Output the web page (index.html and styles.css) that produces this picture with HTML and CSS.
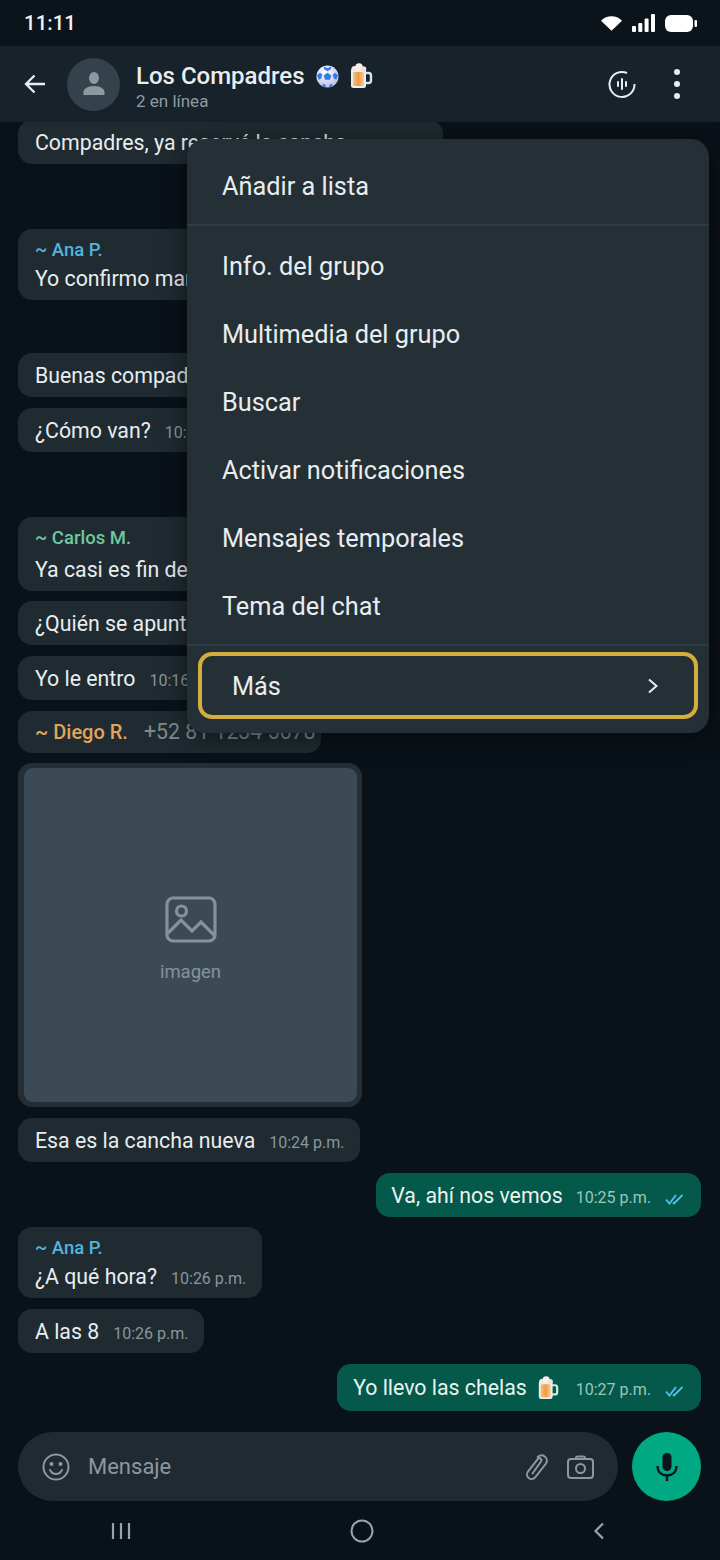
FILE: index.html
```html
<!DOCTYPE html>
<html lang="es">

<head>
  <meta charset="UTF-8">
  <meta name="viewport" content="width=device-width, initial-scale=1.0">
  <title>Los Compadres</title>
  <link rel="stylesheet" href="styles.css">
</head>

<body>
  <svg class="defs" width="0" height="0">
    <defs>
      <linearGradient id="beerFill" x1="0" y1="0" x2="1" y2="0">
        <stop offset="0" stop-color="#f6c27e" />
        <stop offset="0.5" stop-color="#ef9a45" />
        <stop offset="1" stop-color="#f8cf8e" />
      </linearGradient>
      <symbol id="beer" viewBox="0 0 24 26">
        <path d="M16 10h3.500a2.500 2.500 0 0 1 2.500 2.500v5a2.500 2.500 0 0 1-2.500 2.500H16" fill="none" stroke="#cfe8ea" stroke-width="2.400" />
        <rect x="2" y="5" width="15" height="20" rx="2.500" fill="#e8f1f0" />
        <rect x="4" y="9" width="11" height="14" rx="1" fill="url(#beerFill)" />
        <circle cx="5.500" cy="6" r="3" fill="#f3e9e4" />
        <circle cx="10" cy="4" r="3.800" fill="#f7efec" />
        <circle cx="14.500" cy="6" r="2.800" fill="#efe3de" />
      </symbol>
      <symbol id="ticks" viewBox="0 0 20 12">
        <path d="M1 6.500l3.500 4L11 2M8 9.500l1 1L17.500 2" fill="none" stroke="#53bdeb" stroke-width="1.800" />
      </symbol>
    </defs>
  </svg>

  <div class="phone">
    <div class="status-bar">
      <span class="clock">11:11</span>
      <div class="status-icons">
        <svg width="21" height="15" viewBox="0 0 22 15"><path d="M0 4.500C3 1.500 7 0 11 0s8 1.500 11 4.500L11 15z" fill="#fff" /></svg>
        <svg width="23" height="18" viewBox="0 0 23 18">
          <rect x="0" y="12" width="4" height="6" rx="1" fill="#fff" />
          <rect x="6.300" y="9" width="4" height="9" rx="1" fill="#fff" />
          <rect x="12.600" y="4.500" width="4" height="13.500" rx="1" fill="#fff" />
          <rect x="19" y="0" width="4" height="18" rx="1" fill="#fff" />
        </svg>
        <svg width="32" height="17" viewBox="0 0 32 17">
          <rect x="0" y="0" width="28" height="17" rx="6" fill="#fff" />
          <rect x="29.500" y="5" width="2.500" height="7" rx="1" fill="#fff" />
        </svg>
      </div>
    </div>

    <header class="chat-header">
      <svg class="back" width="22" height="20" viewBox="0 0 22 20"><path d="M21 10H2M10.500 1.500L2 10l8.500 8.500" fill="none" stroke="#e9edef" stroke-width="2.300" /></svg>
      <div class="avatar">
        <svg width="26" height="26" viewBox="0 0 26 26">
          <ellipse cx="13" cy="7" rx="5" ry="6" fill="#8c999f" />
          <path d="M2.500 24v-3c0-3 4-6 10.500-6s10.500 3 10.500 6v3z" fill="#8c999f" />
        </svg>
      </div>
      <div class="chat-title">
        <div class="chat-name">
          <span>Los Compadres</span>
          <svg class="emoji-ball" width="23" height="23" viewBox="0 0 24 24">
            <defs>
              <radialGradient id="ballFill" cx="0.400" cy="0.300" r="0.800">
                <stop offset="0" stop-color="#ffffff" />
                <stop offset="1" stop-color="#b7b4ea" />
              </radialGradient>
            </defs>
            <circle cx="12" cy="12" r="11.500" fill="url(#ballFill)" />
            <path d="M12 8l4 3-1.500 4.500h-5L8 11z" fill="#2f7de1" />
            <path d="M8 1.500l4 2 4-2-.5 3-3.500 2-3.500-2zM1 11l3 -3 2.500 2-1 4-2.500 1.500zM23 11l-3-3-2.500 2 1 4 2.500 1.500zM7 19.500l3 1v3l-3-1.500zM17 19.500l-3 1v3l3-1.500z" fill="#2f7de1" />
          </svg>
          <svg class="emoji-beer" width="24" height="26"><use href="#beer" /></svg>
        </div>
        <div class="chat-online">2 en línea</div>
      </div>
      <svg class="voice" width="30" height="28" viewBox="0 0 30 28">
        <path d="M20 3A12.500 12.500 0 1 0 27.500 14" fill="none" stroke="#e9edef" stroke-width="2" />
        <path d="M15 9v10M11 12v4M19 12v4" fill="none" stroke="#e9edef" stroke-width="2" stroke-linecap="round" />
      </svg>
      <div class="dots"><i></i><i></i><i></i></div>
    </header>

    <main class="chat">
      <div class="bubble first-msg">Compadres, ya reservé la cancha</div>

      <div class="bubble named gap-out">
        <div class="sender blue">~ Ana P.</div>
        Yo confirmo mañana<span class="time">10:15 p.m.</span>
      </div>

      <div class="bubble gap-mid">Buenas compadres<span class="time">10:16 p.m.</span></div>
      <div class="bubble">¿Cómo van?<span class="time">10:16 p.m.</span></div>

      <div class="bubble named taller gap-out">
        <div class="sender green">~ Carlos M.</div>
        Ya casi es fin de semana<span class="time">10:16 p.m.</span>
      </div>
      <div class="bubble">¿Quién se apunta?<span class="time">10:16 p.m.</span></div>
      <div class="bubble">Yo le entro<span class="time">10:16 p.m.</span></div>

      <div class="bubble sender-row">
        <span class="sender orange">~ Diego R.</span>
        <span class="phone-number">+52 81 1234 5678</span>
      </div>

      <div class="photo">
        <div class="photo-inner">
          <svg width="52" height="47" viewBox="0 0 52 47">
            <rect x="2" y="2" width="48" height="43" rx="6" fill="none" stroke="#84929c" stroke-width="3.200" />
            <circle cx="16.500" cy="15" r="5" fill="none" stroke="#84929c" stroke-width="3.200" />
            <path d="M3 37l13-13 11 11 9-9 13 13" fill="none" stroke="#84929c" stroke-width="3.200" />
          </svg>
          <span class="photo-label">imagen</span>
        </div>
      </div>

      <div class="bubble">Esa es la cancha nueva<span class="time">10:24 p.m.</span></div>

      <div class="bubble out">
        Va, ahí nos vemos<span class="time">10:25 p.m.</span>
        <svg class="ticks" width="20" height="12"><use href="#ticks" /></svg>
      </div>

      <div class="bubble named">
        <div class="sender blue">~ Ana P.</div>
        ¿A qué hora?<span class="time">10:26 p.m.</span>
      </div>
      <div class="bubble">A las 8<span class="time">10:26 p.m.</span></div>

      <div class="bubble out tall-out">
        Yo llevo las chelas
        <svg class="emoji-inline" width="22" height="24"><use href="#beer" /></svg>
        <span class="time">10:27 p.m.</span>
        <svg class="ticks" width="20" height="12"><use href="#ticks" /></svg>
      </div>
    </main>

    <div class="composer">
      <div class="composer-field">
        <svg width="28" height="28" viewBox="0 0 28 28">
          <circle cx="14" cy="14" r="12.500" fill="none" stroke="#8d989e" stroke-width="2" />
          <circle cx="9.500" cy="11" r="2" fill="#8d989e" />
          <circle cx="18.500" cy="11" r="2" fill="#8d989e" />
          <path d="M8 17c1.500 3 3.500 4 6 4s4.500-1 6-4" fill="none" stroke="#8d989e" stroke-width="2" stroke-linecap="round" />
        </svg>
        <span class="composer-text">Mensaje</span>
        <svg class="clip" width="26" height="28" viewBox="0 0 26 28">
          <path d="M9.500 20.500L18 8.500a2 2 0 0 0-3.300-2.400L4.800 18.800a4.600 4.600 0 0 0 7.200 5.700L23 10.500a5.300 5.300 0 0 0-8.400-6.400" fill="none" stroke="#8d989e" stroke-width="2" stroke-linecap="round" />
        </svg>
        <svg width="27" height="24" viewBox="0 0 27 24">
          <path d="M9 4V3a1.500 1.500 0 0 1 1.500-1.500h6A1.500 1.500 0 0 1 18 3v1" fill="none" stroke="#8d989e" stroke-width="2" />
          <rect x="1" y="4" width="25" height="19" rx="3" fill="none" stroke="#8d989e" stroke-width="2" />
          <circle cx="13.500" cy="13.500" r="4.500" fill="none" stroke="#8d989e" stroke-width="2" />
        </svg>
      </div>
      <div class="mic">
        <svg width="24" height="30" viewBox="0 0 24 30">
          <rect x="7.500" y="1" width="9" height="18" rx="4.500" fill="#0b141a" />
          <path d="M2.500 14c0 6 4 9.500 9.500 9.500s9.500-3.500 9.500-9.500M12 23v6" fill="none" stroke="#0b141a" stroke-width="2.400" />
        </svg>
      </div>
    </div>

    <nav class="nav-bar">
      <svg width="20" height="18" viewBox="0 0 20 18"><path d="M2 1v16M10 1v16M18 1v16" stroke="#9aa3a8" stroke-width="2.200" /></svg>
      <svg width="24" height="24" viewBox="0 0 24 24"><circle cx="12" cy="12" r="10.500" fill="none" stroke="#9aa3a8" stroke-width="2" /></svg>
      <svg width="12" height="18" viewBox="0 0 12 18"><path d="M10 1.500L2.500 9l7.500 7.500" fill="none" stroke="#9aa3a8" stroke-width="2.200" /></svg>
    </nav>

    <div class="menu">
      <div class="menu-item first">Añadir a lista</div>
      <div class="menu-group">
        <div class="menu-item">Info. del grupo</div>
        <div class="menu-item">Multimedia del grupo</div>
        <div class="menu-item">Buscar</div>
        <div class="menu-item">Activar notificaciones</div>
        <div class="menu-item">Mensajes temporales</div>
        <div class="menu-item">Tema del chat</div>
      </div>
      <div class="menu-more">
        <span>Más</span>
        <svg width="12" height="16" viewBox="0 0 12 16"><path d="M2 1.500L9.500 8 2 14.500" fill="none" stroke="#e9edef" stroke-width="2" /></svg>
      </div>
    </div>
  </div>
</body>

</html>
```

FILE: styles.css
```css
* {
  margin: 0;
  padding: 0;
  box-sizing: border-box;
}

body {
  background: #0a1219;
  font-family: Roboto, "Noto Sans", sans-serif;
  color: #e9edef;
}

.defs {
  position: absolute;
}

.phone {
  position: relative;
  display: flex;
  flex-direction: column;
  width: 720px;
  height: 1560px;
  overflow: hidden;
  background: #0a1219;
}

/* status bar */
.status-bar {
  display: flex;
  align-items: center;
  justify-content: space-between;
  height: 46px;
  padding: 0 23px 0 24px;
  background: #0b141b;
}

.clock {
  font-size: 20.500px;
  font-weight: 500;
  color: #f1f3f4;
}

.status-icons {
  display: flex;
  align-items: center;
  gap: 10px;
}

/* header */
.chat-header {
  display: flex;
  align-items: center;
  height: 76px;
  padding: 0 40px 0 24px;
  background: #17222a;
}

.avatar {
  display: flex;
  align-items: center;
  justify-content: center;
  width: 53px;
  height: 53px;
  margin-left: 21px;
  border-radius: 50%;
  background: #34424b;
}

.chat-title {
  flex: 1;
  margin-left: 16px;
  padding-top: 5px;
}

.chat-name {
  display: flex;
  align-items: center;
  height: 30px;
  font-size: 24px;
  font-weight: 500;
}

.emoji-ball {
  margin-left: 11px;
}

.emoji-beer {
  margin-left: 10px;
}

.chat-online {
  margin-top: -1px;
  font-size: 17px;
  line-height: 22px;
  color: #8f9ba1;
}

.voice {
  margin-right: 37px;
}

.dots {
  display: flex;
  flex-direction: column;
  gap: 6px;
}

.dots i {
  display: block;
  width: 6px;
  height: 6px;
  border-radius: 50%;
  background: #e9edef;
}

/* messages */
.chat {
  display: flex;
  flex: 1;
  flex-direction: column;
  align-items: flex-start;
  gap: 10.700px;
  padding: 0 19px 0 18px;
  overflow: hidden;
}

.bubble {
  padding: 11px 16px 9px 17px;
  border-radius: 14px;
  background: #1f2b31;
  font-size: 21.300px;
  line-height: 24px;
  white-space: nowrap;
}

.first-msg {
  min-width: 425px;
  margin-top: -2px;
}

.bubble.named {
  padding-top: 9px;
  padding-bottom: 7px;
  line-height: 28px;
}

.bubble.named .sender {
  margin-bottom: 3px;
}

.bubble.taller .sender {
  margin-bottom: 6px;
}

.gap-out {
  margin-top: 54.300px;
}

.gap-mid {
  margin-top: 42.300px;
}

.sender {
  font-size: 18.500px;
  font-weight: 500;
  line-height: 24px;
}

.sender.blue {
  color: #53b4dd;
}

.sender.green {
  color: #6fc99c;
}

.sender.orange {
  font-size: 20px;
  color: #e2a458;
}

.sender-row {
  display: flex;
  align-items: center;
  gap: 16px;
  width: 303px;
  padding-top: 9px;
  padding-bottom: 9px;
}

.phone-number {
  color: #7f8b91;
}

.time {
  margin-left: 14px;
  font-size: 16px;
  line-height: 1;
  color: #8b969c;
}

.bubble.out {
  display: flex;
  align-items: center;
  align-self: flex-end;
  padding-left: 15px;
  background: #04594a;
  color: #e9f3f0;
}

.bubble.out .time {
  margin-top: 4px;
  margin-left: 13px;
  color: #9cc7bb;
}

.bubble.tall-out {
  padding-top: 12px;
  padding-bottom: 11px;
  padding-left: 16px;
}

.bubble.tall-out .time {
  margin-left: 17px;
}

.emoji-inline {
  margin-left: 10px;
}

.ticks {
  margin: 6px 0 0 14px;
}

.photo {
  width: 344px;
  height: 344px;
  padding: 5px 5px 5px 6px;
  border-radius: 14px;
  background: #232e36;
}

.photo-inner {
  display: flex;
  flex-direction: column;
  align-items: center;
  justify-content: center;
  gap: 18px;
  height: 100%;
  padding-top: 8px;
  border-radius: 9px;
  background: #3c4a55;
}

.photo-label {
  font-size: 18.500px;
  color: #84929c;
}

/* composer */
.composer {
  display: flex;
  align-items: center;
  gap: 14px;
  padding: 0 19px 0 18px;
}

.composer-field {
  display: flex;
  flex: 1;
  align-items: center;
  height: 69px;
  padding: 0 24px;
  border-radius: 35px;
  background: #1f2a31;
}

.composer-text {
  flex: 1;
  margin-left: 18px;
  font-size: 22px;
  color: #8d989e;
}

.clip {
  margin-right: 18px;
}

.mic {
  display: flex;
  align-items: center;
  justify-content: center;
  width: 69px;
  height: 69px;
  border-radius: 50%;
  background: #00a884;
}

/* nav */
.nav-bar {
  display: flex;
  align-items: center;
  justify-content: space-between;
  height: 59px;
  padding: 0 115px 0 111px;
}

/* overflow menu */
.menu {
  position: absolute;
  top: 139px;
  left: 187px;
  width: 522px;
  height: 594px;
  padding-bottom: 14px;
  border-radius: 18px;
  background: #243036;
  box-shadow: 0 4px 24px rgba(0, 0, 0, 0.55);
  font-size: 25.300px;
}

.menu-item {
  display: flex;
  align-items: center;
  height: 68px;
  padding: 2px 0 0 35px;
}

.menu-item.first {
  height: 87px;
  padding-top: 10px;
  border-bottom: 2px solid #2e3b42;
}

.menu-group {
  padding: 5px 0;
  border-bottom: 2px solid #2e3b42;
}

.menu-more {
  display: flex;
  align-items: center;
  justify-content: space-between;
  height: 67px;
  margin: 6px 11px 0;
  padding: 1px 35px 0 30px;
  border: 4px solid #d4ae3c;
  border-radius: 14px;
}
```
